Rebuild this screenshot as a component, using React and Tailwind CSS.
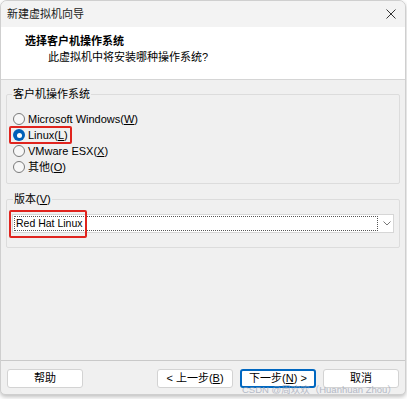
import React from "react";

const FONT = { fontFamily: '"Liberation Sans", "Noto Sans CJK SC", sans-serif' };

function U({ children }) {
  return <span className="underline underline-offset-[1px]">{children}</span>;
}

function Radio({ checked, children, box }) {
  return (
    <div className="relative flex items-center h-[16px]">
      <span
        className={
          checked
            ? "w-[12px] h-[12px] rounded-full bg-[#005fb8] flex items-center justify-center"
            : "w-[12px] h-[12px] rounded-full border border-[#7a7a7a] bg-[#f7f7f7]"
        }
      >
        {checked && <span className="w-[5px] h-[5px] rounded-full bg-white" />}
      </span>
      <span className="ml-[3px] text-[11px] leading-[16px] text-black">{children}</span>
      {box && (
        <span className="absolute -left-[4px] -top-[1px] w-[63px] h-[18px] border-2 border-[#e0241e] rounded-[2px]" />
      )}
    </div>
  );
}

function Btn({ children, primary }) {
  return (
    <button
      className={
        primary
          ? "w-[76px] h-[19px] rounded-[3px] border-2 border-[#0067c0] bg-white text-[11px] leading-[15px] text-black flex items-center justify-center"
          : "w-[76px] h-[19px] rounded-[3px] border border-[#d3d3d3] bg-white text-[11px] leading-[17px] text-black flex items-center justify-center"
      }
    >
      {children}
    </button>
  );
}

export default function App() {
  return (
    <div className="w-[407px] h-[399px] bg-white relative overflow-hidden" style={FONT}>
      <div className="w-[406px] h-[395px] rounded-t-[7px] rounded-b-[5px] border border-[#cfcfcf] bg-[#f0f0f0] flex flex-col overflow-hidden shadow-[0_2px_4px_rgba(0,0,0,0.25)]">
        {/* title bar */}
        <div className="h-[26px] shrink-0 bg-[#f3f3f3] flex items-center justify-between pl-[6px] pr-[8px]">
          <span className="text-[11px] leading-[16px] text-[#1a1a1a]">新建虚拟机向导</span>
          <svg width="10" height="10" viewBox="0 0 10 10" className="mr-[1px]">
            <path d="M0.5 0.5 L9.5 9.5 M9.5 0.5 L0.5 9.5" stroke="#333" strokeWidth="1" fill="none" />
          </svg>
        </div>
        {/* header */}
        <div className="h-[53px] shrink-0 bg-white border-b border-[#d5d5d5] pl-[24px] pt-[6px]">
          <div className="text-[11px] leading-[16px] font-bold text-black">选择客户机操作系统</div>
          <div className="pl-[23px] text-[11px] leading-[16px] text-black">此虚拟机中将安装哪种操作系统?</div>
        </div>
        {/* body */}
        <div className="flex-1 px-[5px]">
          <fieldset className="mt-[6px] border border-[#dcdcdc] rounded-[2px] pl-[6px] pr-[6px] pb-[8px]">
            <legend className="text-[11px] leading-[16px] text-black px-[1px] -ml-[1px]">客户机操作系统</legend>
            <div className="pt-[9px] flex flex-col">
              <Radio>Microsoft Windows(<U>W</U>)</Radio>
              <Radio checked box>Linux(<U>L</U>)</Radio>
              <Radio>VMware ESX(<U>X</U>)</Radio>
              <Radio>其他(<U>O</U>)</Radio>
            </div>
          </fieldset>
          <fieldset className="mt-[7px] border border-[#dcdcdc] rounded-[2px] px-[5px] pb-[14px]">
            <legend className="text-[11px] leading-[16px] text-black px-[1px] ml-[1px]">版本(<U>V</U>)</legend>
            <div className="relative mt-[7px] h-[19px] bg-white border border-[#d6d6d6] flex items-center">
              <div className="ml-[1px] w-[364px] h-[15px] border border-dotted border-[#555] flex items-center">
                <span className="ml-[1px] text-[10.5px] leading-[13px] text-black">Red Hat Linux</span>
              </div>
              <svg width="8" height="5" viewBox="0 0 8 5" className="ml-[5px]">
                <path d="M0.5 0.5 L4 4 L7.5 0.5" stroke="#777" strokeWidth="1" fill="none" />
              </svg>
              <span className="absolute -left-[4px] -top-[5px] w-[78px] h-[28px] border-2 border-[#e0241e] rounded-[2px]" />
            </div>
          </fieldset>
        </div>
        {/* footer */}
        <div className="shrink-0 border-t border-[#c9c9c9] pt-[8px] pb-[6px] px-[6px] flex justify-between">
          <Btn>帮助</Btn>
          <div className="flex gap-[7px]">
            <Btn>&lt; 上一步(<U>B</U>)</Btn>
            <Btn primary>下一步(<U>N</U>) &gt;</Btn>
            <Btn>取消</Btn>
          </div>
        </div>
      </div>
      <span className="absolute left-[242px] top-[384px] text-[9.5px] leading-[12px] text-[#9aa2b4] opacity-70 whitespace-nowrap">
        CSDN @周欢欢（Huanhuan Zhou）
      </span>
    </div>
  );
}
